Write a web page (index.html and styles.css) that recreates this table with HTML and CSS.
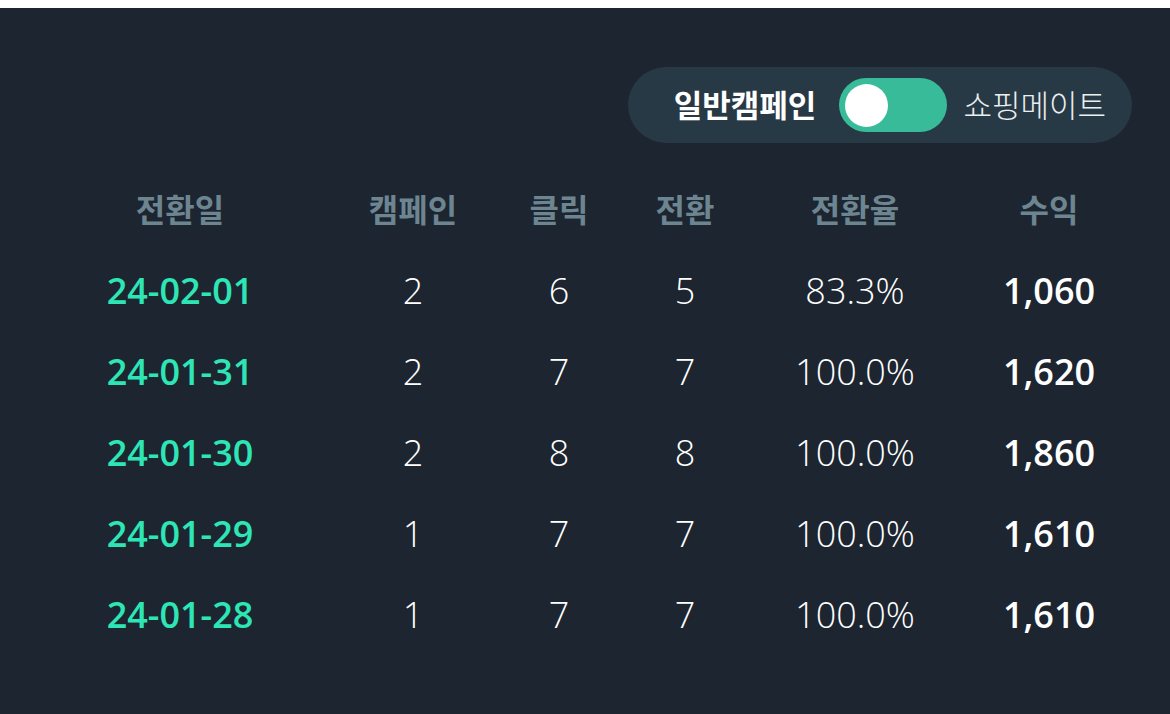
FILE: index.html
```html
<!DOCTYPE html>
<html lang="ko">
<head>
<meta charset="utf-8">
<link rel="stylesheet" href="styles.css">
</head>
<body>
<div class="panel">
  <div class="toolbar">
    <div class="mode-pill">
      <span class="mode-label active">일반캠페인</span>
      <span class="switch"><span class="knob"></span></span>
      <span class="mode-label">쇼핑메이트</span>
    </div>
  </div>
  <div class="table">
    <div class="row head">
      <div>전환일</div><div>캠페인</div><div>클릭</div><div>전환</div><div>전환율</div><div>수익</div>
    </div>
    <div class="row">
      <div class="date">24-02-01</div><div>2</div><div>6</div><div>5</div><div>83.3%</div><div class="rev">1,060</div>
    </div>
    <div class="row">
      <div class="date">24-01-31</div><div>2</div><div>7</div><div>7</div><div>100.0%</div><div class="rev">1,620</div>
    </div>
    <div class="row">
      <div class="date">24-01-30</div><div>2</div><div>8</div><div>8</div><div>100.0%</div><div class="rev">1,860</div>
    </div>
    <div class="row">
      <div class="date">24-01-29</div><div>1</div><div>7</div><div>7</div><div>100.0%</div><div class="rev">1,610</div>
    </div>
    <div class="row">
      <div class="date">24-01-28</div><div>1</div><div>7</div><div>7</div><div>100.0%</div><div class="rev">1,610</div>
    </div>
  </div>
</div>
</body>
</html>
```

FILE: styles.css
```css
html, body {
  margin: 0;
  padding: 0;
  background: #ffffff;
}
body {
  padding-top: 8px;
  font-family: "Open Sans", "Noto Sans CJK KR", sans-serif;
}
.panel {
  background: #1c2530;
  height: 706px;
  box-sizing: border-box;
  padding-top: 59px;
}
.toolbar {
  display: flex;
  justify-content: flex-end;
  padding-right: 38px;
}
.mode-pill {
  display: flex;
  align-items: center;
  height: 76px;
  box-sizing: border-box;
  padding: 0 26px 0 46px;
  background: #283946;
  border-radius: 38px;
}
.mode-label {
  font-size: 31px;
  font-weight: 300;
  color: #e9eef1;
  line-height: 1;
}
.mode-label.active {
  font-weight: 700;
  color: #ffffff;
  margin-right: 23px;
}
.switch {
  display: flex;
  align-items: center;
  width: 108px;
  height: 54px;
  border-radius: 27px;
  background: #38bb99;
  padding-left: 6px;
  box-sizing: border-box;
  margin-right: 16px;
}
.knob {
  width: 43px;
  height: 43px;
  border-radius: 50%;
  background: #ffffff;
}
.table {
  margin-top: 26px;
}
.row {
  display: grid;
  grid-template-columns: 360px 106px 186px 66px 274px 114px;
  height: 81px;
  align-items: center;
  font-size: 36px;
  font-weight: 300;
  color: #ffffff;
  line-height: 1;
}
.row > div {
  text-align: center;
  white-space: nowrap;
}
.row.head {
  font-size: 32px;
  font-weight: 700;
  color: #6d8591;
}
.date {
  color: #2ee6b5;
  font-weight: 600;
}
.rev {
  font-weight: 600;
}
```
